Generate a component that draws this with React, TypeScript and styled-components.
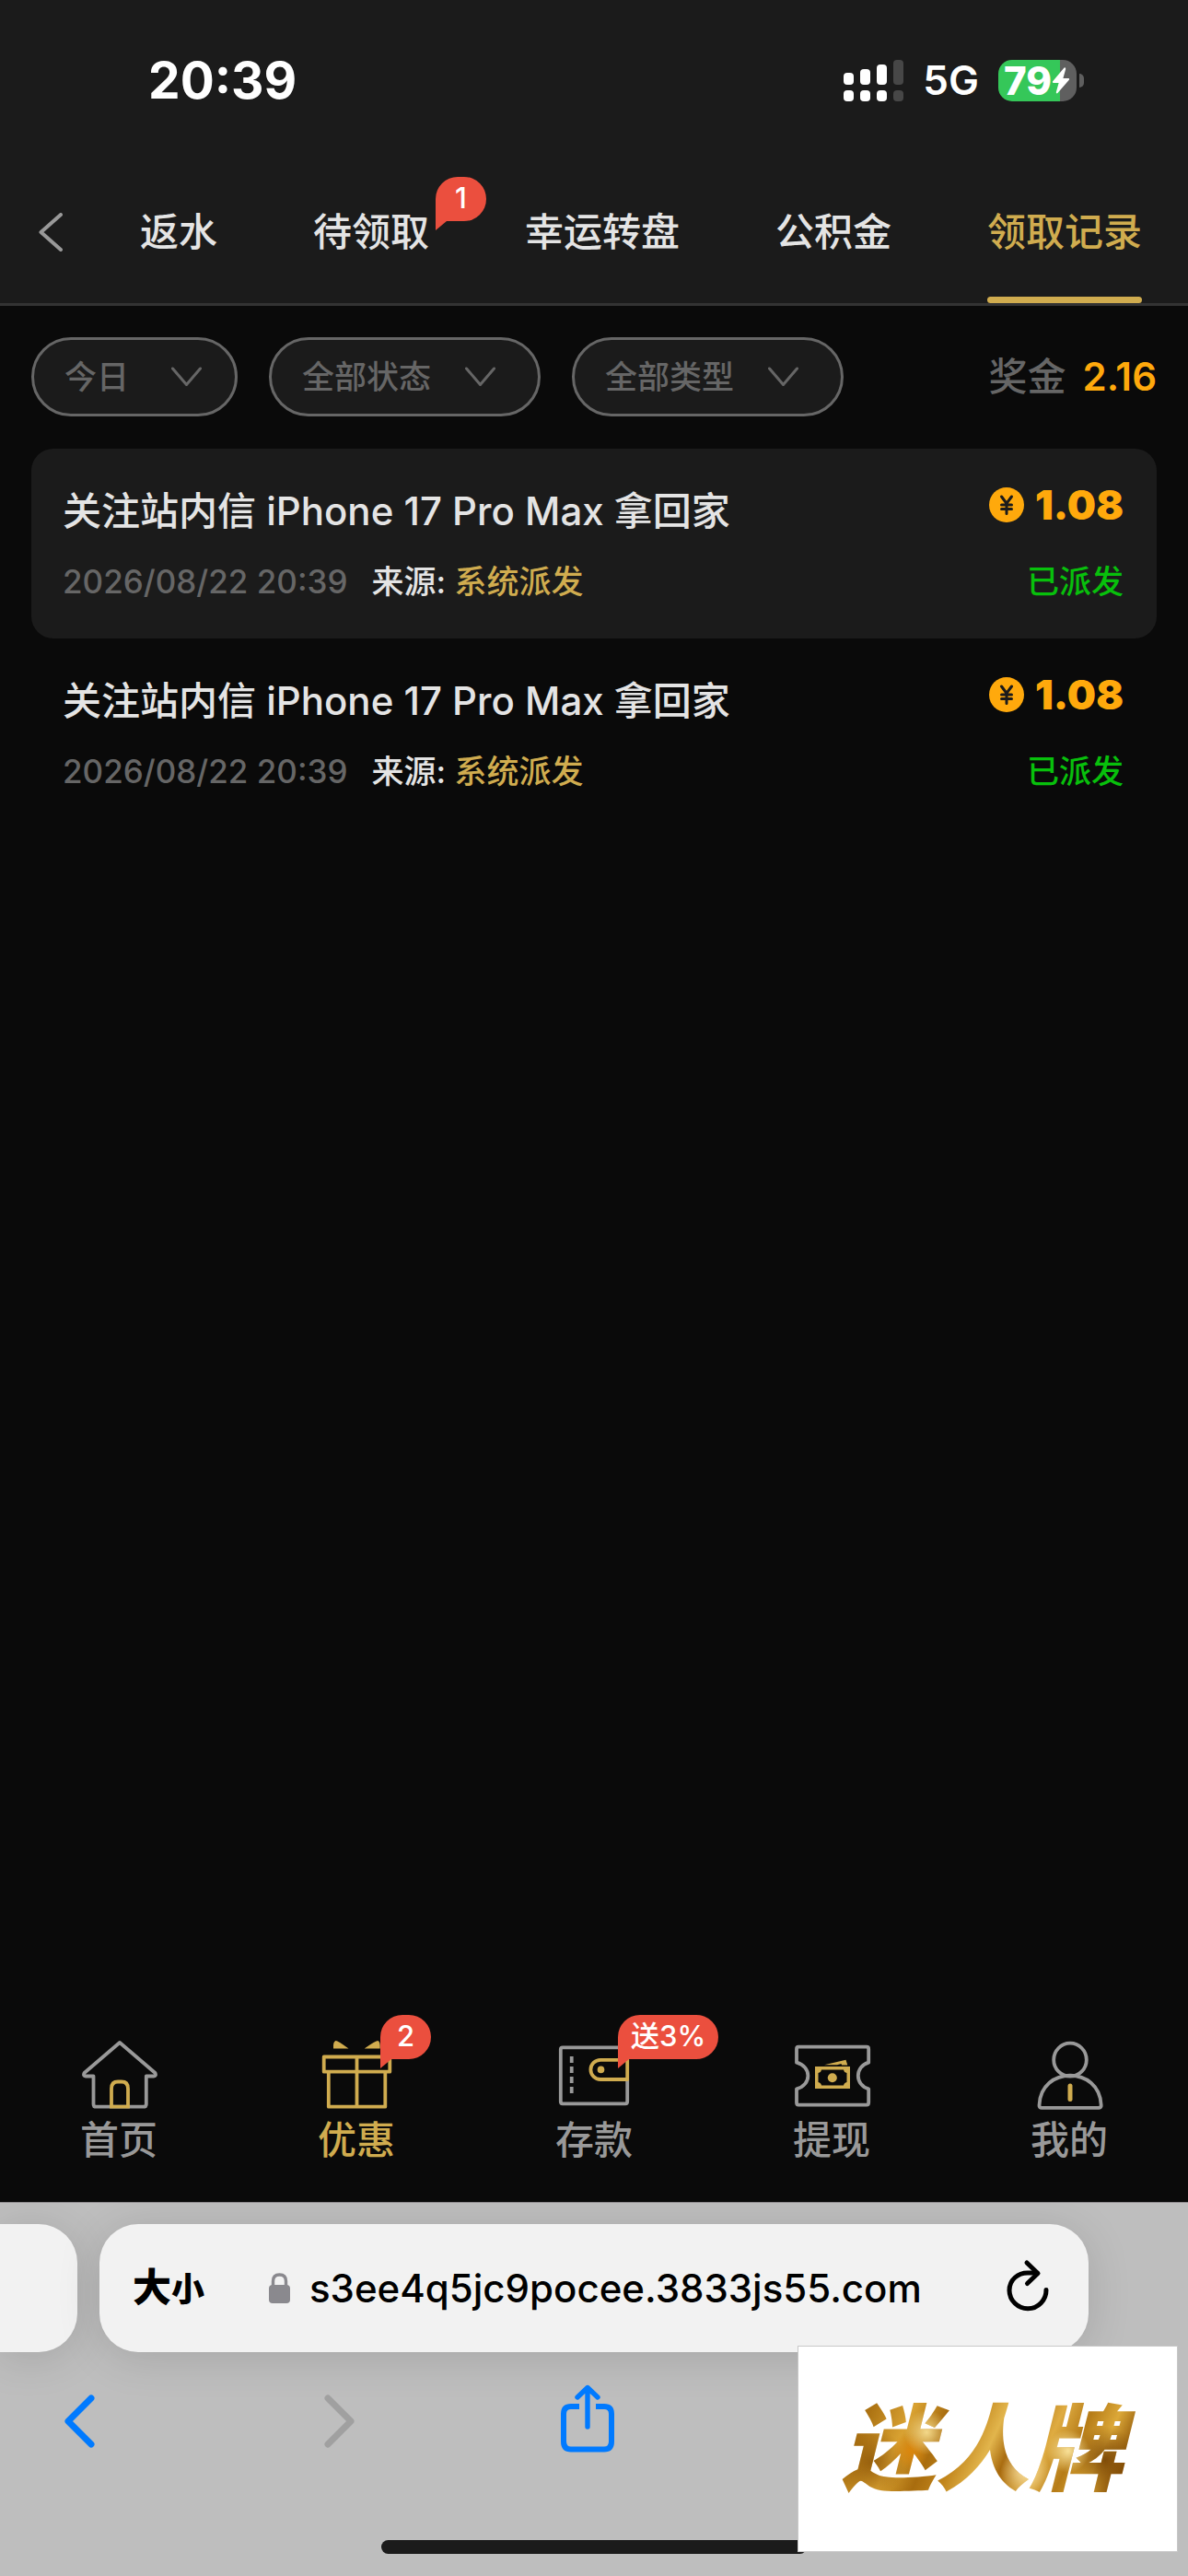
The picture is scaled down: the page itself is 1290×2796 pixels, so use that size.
import React from "react";
import styled, { createGlobalStyle } from "styled-components";

const GRAY = "#999999";
const DIM = "#666666";
const GOLD = "#d0ac4f";
const ORANGE = "#ffa90c";
const RED = "#eb4f3e";
const PANEL = "#1b1b1b";
const BLUE = "#007aff";

const GlobalStyle = createGlobalStyle`
  * { box-sizing: border-box; }
  body {
    margin: 0;
    background: #0a0a0a;
    color: #e4e4e4;
    font-family: Inter, "Noto Sans CJK SC", sans-serif;
    font-weight: 500;
  }
  button, input, select {
    margin: 0;
    padding: 0;
    border: 0;
    background: none;
    color: inherit;
    font: inherit;
  }
  svg { display: block; flex: none; }
`;

const Page = styled.div`
  position: relative;
  display: flex;
  flex-direction: column;
  min-height: 100vh;
`;

/* ---------- status bar and tabs ---------- */

const Header = styled.header`
  background: ${PANEL};
  border-bottom: 3px solid #333333;
`;

const StatusBar = styled.div`
  display: flex;
  align-items: center;
  justify-content: space-between;
  height: 174px;
  padding: 0 113px 0 161px;
  color: #ffffff;
`;

const Clock = styled.time`
  font-size: 55px;
  line-height: 60px;
  font-weight: 700;
`;

const StatusIcons = styled.div`
  display: flex;
  align-items: center;
  gap: 21px;
`;

const Network = styled.span`
  font-size: 44px;
  line-height: 60px;
  font-weight: 600;
`;

const BatteryWrap = styled.div`
  display: flex;
  align-items: center;
  gap: 3px;
`;

const Battery = styled.div<{ $level: number }>`
  display: flex;
  align-items: center;
  width: 85px;
  height: 45px;
  padding-left: 6px;
  border-radius: 15px;
  background: linear-gradient(
    to right,
    #35c759 ${(p) => p.$level}%,
    #5f5f5f ${(p) => p.$level}%
  );
  font-size: 42px;
  line-height: 45px;
  font-weight: 800;
`;

const BatteryTip = styled.div`
  width: 5px;
  height: 15px;
  border-radius: 0 5px 5px 0;
  background: #5f5f5f;
`;

const TabBar = styled.nav`
  display: flex;
  align-items: stretch;
  height: 155px;
  padding: 0 50px 0 42px;
`;

const BackButton = styled.button`
  display: flex;
  align-items: center;
  width: 110px;
`;

const TabList = styled.div`
  display: flex;
  flex: 1;
  justify-content: space-between;
`;

const Tab = styled.button<{ $active?: boolean }>`
  position: relative;
  font-size: 42px;
  line-height: 60px;
  white-space: nowrap;
  color: ${(p) => (p.$active ? GOLD : "#e4e4e4")};

  &::after {
    content: "";
    position: absolute;
    left: 0;
    right: 0;
    bottom: 0;
    height: 7px;
    border-radius: 4px;
    background: ${(p) => (p.$active ? GOLD : "transparent")};
  }
`;

const Badge = styled.span<{ $left: number; $top: number }>`
  position: absolute;
  left: ${(p) => p.$left}px;
  top: ${(p) => p.$top}px;
  min-width: 55px;
  height: 48px;
  padding: 0 14px;
  border-radius: 24px 24px 24px 0;
  background: ${RED};
  color: #ffffff;
  font-size: 31px;
  line-height: 46px;
  text-align: center;
  white-space: nowrap;

  &::after {
    content: "";
    position: absolute;
    left: 0;
    top: 100%;
    border-top: 10px solid ${RED};
    border-right: 12px solid transparent;
  }
`;

/* ---------- records ---------- */

const Main = styled.main`
  flex: 1;
  padding: 34px 34px 0;
`;

const FilterRow = styled.div`
  display: flex;
  align-items: center;
  gap: 34px;
  margin-bottom: 35px;
`;

const FilterPill = styled.label<{ $wide?: boolean }>`
  display: flex;
  align-items: center;
  width: ${(p) => (p.$wide ? 295 : 224)}px;
  height: 86px;
  padding: 0 ${(p) => (p.$wide ? 46 : 36)}px 0 33px;
  border: 3px solid ${DIM};
  border-radius: 43px;
  background: ${PANEL};
  color: ${DIM};
`;

const FilterSelect = styled.select`
  appearance: none;
  flex: 1;
  min-width: 0;
  font-size: 35px;
  line-height: 50px;
`;

const Total = styled.div`
  display: flex;
  gap: 18px;
  margin-left: auto;
  font-size: 42px;
  line-height: 60px;
  color: ${DIM};
`;

const TotalValue = styled.span`
  color: ${ORANGE};
  font-weight: 600;
`;

const RecordList = styled.ul`
  margin: 0;
  padding: 0;
  list-style: none;
`;

const RecordCard = styled.li`
  display: flex;
  justify-content: space-between;
  padding: 36px 36px 37px 34px;
  border-radius: 24px;

  &:nth-child(odd) {
    background: ${PANEL};
  }
`;

const RecordInfo = styled.div`
  display: flex;
  flex-direction: column;
  gap: 19px;
`;

const RecordTitle = styled.h2`
  margin: 0;
  font-size: 42px;
  line-height: 64px;
  font-weight: 500;
`;

const RecordMeta = styled.div`
  display: flex;
  gap: 26px;
  font-size: 35px;
  line-height: 50px;
`;

const RecordTime = styled.time`
  color: ${DIM};
`;

const Source = styled.span`
  color: ${GOLD};
`;

const RecordResult = styled.div`
  display: flex;
  flex-direction: column;
  align-items: flex-end;
  justify-content: space-between;
`;

const Amount = styled.div`
  display: flex;
  align-items: center;
  gap: 12px;
  color: ${ORANGE};
  font-size: 44px;
  line-height: 50px;
  font-weight: 900;
`;

const Status = styled.span`
  color: #08c00c;
  font-size: 35px;
  line-height: 50px;
`;

/* ---------- site navigation ---------- */

const BottomNav = styled.nav`
  display: grid;
  grid-template-columns: repeat(5, 1fr);
  padding: 38px 0 42px;
`;

const NavLink = styled.a<{ $active?: boolean }>`
  display: flex;
  flex-direction: column;
  align-items: center;
  gap: 6px;
  color: ${(p) => (p.$active ? GOLD : GRAY)};
  font-size: 42px;
  line-height: 50px;
  text-decoration: none;
`;

const NavIcon = styled.span`
  position: relative;
`;

/* ---------- browser chrome ---------- */

const Browser = styled.footer`
  border-top: 1px solid #8f8b8e;
  background: #bebebe;
  color: #000000;
  overflow: hidden;
`;

const AddressRow = styled.div`
  display: flex;
  gap: 24px;
  padding: 23px 108px 0 0;
`;

const PreviousTab = styled.button`
  width: 84px;
  height: 139px;
  border-radius: 0 42px 42px 0;
  background: #f2f2f2;
  box-shadow: 0 6px 48px rgba(0, 0, 0, 0.13);
`;

const AddressBar = styled.form`
  display: flex;
  flex: 1;
  align-items: center;
  height: 139px;
  padding: 0 42px 0 36px;
  border-radius: 42px;
  background: #f2f2f2;
  box-shadow: 0 6px 48px rgba(0, 0, 0, 0.13);
`;

const TextSizeButton = styled.button`
  display: flex;
  align-items: baseline;
  width: 147px;
  font-size: 42px;
  line-height: 60px;
  font-weight: 800;
`;

const SmallGlyph = styled.span`
  font-size: 36px;
`;

const AddressLabel = styled.label`
  display: flex;
  flex: 1;
  align-items: center;
  gap: 20px;
`;

const AddressInput = styled.input`
  flex: 1;
  min-width: 0;
  font-size: 42px;
  line-height: 60px;
`;

const IconButton = styled.button`
  display: flex;
  align-items: center;
  justify-content: center;
`;

const Toolbar = styled.div`
  display: flex;
  gap: 212px;
  padding: 35px 54px 89px;
`;

const HomeIndicator = styled.div`
  width: 462px;
  height: 15px;
  margin: 0 auto 24px;
  border-radius: 8px;
  background: #1b1b1b;
`;

const Watermark = styled.div`
  position: absolute;
  right: 11px;
  bottom: 26px;
  display: flex;
  align-items: center;
  justify-content: center;
  width: 413px;
  height: 224px;
  border: 1px solid #c8c8c8;
  background: #ffffff;
`;

const WatermarkText = styled.span`
  padding: 0 20px 0 8px;
  background:
    radial-gradient(circle at 30% 35%, rgba(250, 226, 150, 0.9) 0, rgba(250, 226, 150, 0) 10%),
    radial-gradient(circle at 62% 70%, rgba(252, 230, 170, 0.9) 0, rgba(252, 230, 170, 0) 12%),
    radial-gradient(circle at 76% 52%, rgba(255, 235, 165, 0.9) 0, rgba(255, 235, 165, 0) 9%),
    radial-gradient(circle at 25% 52%, rgba(222, 134, 10, 0.9) 0, rgba(222, 134, 10, 0) 8%),
    radial-gradient(circle at 88% 60%, rgba(120, 68, 4, 0.9) 0, rgba(120, 68, 4, 0) 12%),
    radial-gradient(circle at 12% 62%, rgba(140, 85, 8, 0.8) 0, rgba(140, 85, 8, 0) 12%),
    linear-gradient(115deg, #a06a0c 0%, #ac7212 12%, #d9a232 24%, #a86c0e 34%, #c2861c 42%,
      #e2b54c 50%, #a86a0e 56%, #dfac42 66%, #b67c18 74%, #dca838 82%, #8c5408 90%, #c88c22 100%);
  background-clip: text;
  -webkit-background-clip: text;
  color: transparent;
  font-size: 102px;
  line-height: 120px;
  font-weight: 900;
  font-style: italic;
`;

/* ---------- drawings ---------- */

const SignalIcon = () => (
  <svg width="65" height="45" viewBox="0 0 65 45" fill="#fff" aria-hidden="true">
    <rect x="0" y="14" width="11" height="13" rx="4" />
    <rect x="18" y="10" width="11" height="17" rx="4" />
    <rect x="36" y="5" width="11" height="22" rx="4" />
    <rect x="54" y="0" width="11" height="27" rx="4" fill="#474747" />
    <rect x="0" y="33" width="11" height="12" rx="4" />
    <rect x="18" y="33" width="11" height="12" rx="4" />
    <rect x="36" y="33" width="11" height="12" rx="4" />
    <rect x="54" y="33" width="11" height="12" rx="4" fill="#474747" />
  </svg>
);

const BoltIcon = () => (
  <svg width="20" height="31" viewBox="0 0 21 31" fill="#fff" aria-hidden="true">
    <path d="M14 1 L1 16.500 Q0.500 18 2 18 H8 L5 29 Q5.500 31 7 29.500 L20 14.500 Q20.500 13 19 13 H13 L16 2 Q15.500 0 14 1 Z" />
  </svg>
);

const ChevronLeft = () => (
  <svg width="27" height="42" viewBox="0 0 27 42" fill="none" stroke={GRAY} strokeWidth="4" strokeLinecap="round" strokeLinejoin="round" aria-hidden="true">
    <path d="M24 2 L2.500 21 L24 40" />
  </svg>
);

const ChevronDown = () => (
  <svg width="33" height="22" viewBox="0 0 33 22" fill="none" stroke={DIM} strokeWidth="3" strokeLinecap="round" strokeLinejoin="round" aria-hidden="true">
    <path d="M1.500 2 L16.500 19.500 L31.500 2" />
  </svg>
);

const CoinIcon = () => (
  <svg width="38" height="38" viewBox="0 0 38 38" aria-hidden="true">
    <circle cx="19" cy="19" r="19" fill={ORANGE} />
    <path d="M13.500 10 L19 17.500 L24.500 10 M19 17.500 V28.500 M13.500 19 H24.500 M13.500 23.500 H24.500" fill="none" stroke="#1b1b1b" strokeWidth="3" strokeLinecap="round" />
  </svg>
);

const NavSvg = ({ children }: { children: React.ReactNode }) => (
  <svg width="86" height="80" viewBox="0 0 86 80" fill="none" stroke={GRAY} strokeWidth="3.800" strokeLinejoin="round" aria-hidden="true">
    {children}
  </svg>
);

const HomeIcon = () => (
  <NavSvg>
    <path d="M44 5 L5.500 38 Q4 41.500 7 41.500 H15.500 V72 Q15.500 74.700 18 74.700 H70 Q72.800 74.700 72.800 72 V41.500 H81 Q84 41.500 82.500 38 Z" />
    <path d="M35 74.700 V55 Q35 47.500 42 47.500 H46 Q53 47.500 53 55 V74.700 Z" stroke={GOLD} strokeLinejoin="miter" />
  </NavSvg>
);

const GiftIcon = () => (
  <NavSvg>
    <g stroke={GOLD}>
      <path d="M7.700 20.500 H79.300 V36.700 H7.700 Z M12.800 36.700 V74.700 H74.300 V36.700 M43.500 20.500 V74.700" />
      <path d="M18 11.400 Q17.500 4 20.500 3 Q22 2.500 34.500 11.400 Z M51.700 11.400 Q64 3 66.500 3 Q69 4 68.700 11.400 Z" fill={GOLD} stroke="none" />
    </g>
  </NavSvg>
);

const WalletIcon = () => (
  <NavSvg>
    <path d="M79.200 24 V12.500 Q79.200 10.300 77 10.300 H9 Q6.800 10.300 6.800 12.500 V69 Q6.800 71.300 9 71.300 H77 Q79.200 71.300 79.200 69 V45" />
    <path d="M18.700 20 V60" strokeDasharray="7 4" />
    <path d="M79.200 23.800 H50 A10.600 10.600 0 0 0 50 45 H79.200 Z" stroke={GOLD} />
    <circle cx="50.500" cy="34.400" r="3.800" fill={GOLD} stroke="none" />
  </NavSvg>
);

const TicketIcon = () => (
  <NavSvg>
    <path d="M5 12 Q5 9.700 7 9.700 H81 Q83.200 9.700 83.200 12 V26.700 C68 31 68 51 83.200 55.300 V70 Q83.200 72.700 81 72.700 H7 Q5 72.700 5 70 V55.300 C21.500 51 21.500 31 5 26.700 Z" />
    <g fill={GOLD} stroke="none">
      <path fillRule="evenodd" d="M25 31 H63 V55 H25 Z M32 34.500 Q31.500 37.500 28.500 38 V48 Q31.500 48.500 32 51.500 H56 Q56.500 48.500 59.500 48 V38 Q56.500 37.500 56 34.500 Z" />
      <circle cx="43.800" cy="43.200" r="5" />
      <path d="M35 29.300 L58.500 23.700 L60.300 29.500 H54 L53.500 28 L49 29.300 Z" />
    </g>
  </NavSvg>
);

const PersonIcon = () => (
  <NavSvg>
    <ellipse cx="44" cy="23.700" rx="17.800" ry="18" />
    <path d="M10.500 73 C12 30 76 30 77.700 73 Q77.700 75.800 75 75.800 H13 Q10.500 75.800 10.500 73 Z" />
    <path d="M44 52 V66.500" stroke={GOLD} strokeWidth="5" strokeLinecap="round" />
  </NavSvg>
);

const LockIcon = () => (
  <svg width="25" height="34" viewBox="0 0 25 34" aria-hidden="true">
    <rect x="1" y="13" width="23" height="20" rx="4" fill="#8a898e" />
    <path d="M5.500 14 V9 Q5.500 2 12.500 2 Q19.500 2 19.500 9 V14" fill="none" stroke="#8a898e" strokeWidth="3.400" />
  </svg>
);

const ReloadIcon = () => (
  <svg width="48" height="64" viewBox="0 0 48 64" fill="none" stroke="#000" strokeWidth="5" strokeLinecap="round" strokeLinejoin="round" aria-hidden="true">
    <path d="M34 15 H26 C13 14 4 23 4 34 A20 20 0 0 0 44 33.500" />
    <path d="M23 4 L35 15.500 L23.500 26.500" />
  </svg>
);

const BrowserBackIcon = () => (
  <svg width="64" height="80" viewBox="0 0 64 80" fill="none" stroke={BLUE} strokeWidth="7" strokeLinecap="round" strokeLinejoin="round" aria-hidden="true">
    <path d="M45 15 L20 40 L45 65" />
  </svg>
);

const BrowserForwardIcon = () => (
  <svg width="64" height="80" viewBox="0 0 64 80" fill="none" stroke="#a0a0a0" strokeWidth="7" strokeLinecap="round" strokeLinejoin="round" aria-hidden="true">
    <path d="M26 15 L51 40 L26 65" />
  </svg>
);

const ShareIcon = () => (
  <svg width="64" height="80" viewBox="0 0 64 80" fill="none" stroke={BLUE} strokeWidth="6" strokeLinejoin="round" aria-hidden="true">
    <path d="M23 24 H14 Q6 24 6 32 V62 Q6 70.500 14 70.500 H50 Q58 70.500 58 62 V32 Q58 24 50 24 H41" />
    <path d="M32 46 V4 M21 14 L32 3.500 L43 14" strokeWidth="5.400" strokeLinecap="round" />
  </svg>
);

/* ---------- content ---------- */

const tabs = [
  { label: "返水" },
  { label: "待领取", badge: "1" },
  { label: "幸运转盘" },
  { label: "公积金" },
  { label: "领取记录", active: true },
];

const filters = [
  { name: "日期", value: "今日" },
  { name: "状态", value: "全部状态", wide: true },
  { name: "类型", value: "全部类型", wide: true },
];

const records = [1, 2].map((id) => ({
  id,
  title: "关注站内信 iPhone 17 Pro Max 拿回家",
  time: "2026/08/22 20:39",
  source: "系统派发",
  amount: "1.08",
  status: "已派发",
}));

const navItems = [
  { label: "首页", Icon: HomeIcon },
  { label: "优惠", Icon: GiftIcon, badge: "2", active: true },
  { label: "存款", Icon: WalletIcon, badge: "送3%" },
  { label: "提现", Icon: TicketIcon },
  { label: "我的", Icon: PersonIcon },
];

export default function App() {
  return (
    <Page>
      <GlobalStyle />
      <Header>
        <StatusBar>
          <Clock>20:39</Clock>
          <StatusIcons>
            <SignalIcon />
            <Network>5G</Network>
            <BatteryWrap>
              <Battery $level={79}>
                79
                <BoltIcon />
              </Battery>
              <BatteryTip />
            </BatteryWrap>
          </StatusIcons>
        </StatusBar>
        <TabBar>
          <BackButton type="button" aria-label="返回">
            <ChevronLeft />
          </BackButton>
          <TabList>
            {tabs.map((tab) => (
              <Tab key={tab.label} type="button" $active={tab.active}>
                {tab.label}
                {tab.badge && (
                  <Badge $left={133} $top={18}>
                    {tab.badge}
                  </Badge>
                )}
              </Tab>
            ))}
          </TabList>
        </TabBar>
      </Header>

      <Main>
        <FilterRow>
          {filters.map((filter) => (
            <FilterPill key={filter.name} $wide={filter.wide}>
              <FilterSelect aria-label={filter.name}>
                <option>{filter.value}</option>
              </FilterSelect>
              <ChevronDown />
            </FilterPill>
          ))}
          <Total>
            奖金 <TotalValue>2.16</TotalValue>
          </Total>
        </FilterRow>
        <RecordList>
          {records.map((record) => (
            <RecordCard key={record.id}>
              <RecordInfo>
                <RecordTitle>{record.title}</RecordTitle>
                <RecordMeta>
                  <RecordTime>{record.time}</RecordTime>
                  <span>
                    来源: <Source>{record.source}</Source>
                  </span>
                </RecordMeta>
              </RecordInfo>
              <RecordResult>
                <Amount>
                  <CoinIcon />
                  {record.amount}
                </Amount>
                <Status>{record.status}</Status>
              </RecordResult>
            </RecordCard>
          ))}
        </RecordList>
      </Main>

      <BottomNav>
        {navItems.map(({ label, Icon, badge, active }) => (
          <NavLink key={label} href="#" $active={active}>
            <NavIcon>
              <Icon />
              {badge && (
                <Badge $left={69} $top={-25}>
                  {badge}
                </Badge>
              )}
            </NavIcon>
            {label}
          </NavLink>
        ))}
      </BottomNav>

      <Browser>
        <AddressRow>
          <PreviousTab type="button" aria-label="上一个标签页" />
          <AddressBar>
            <TextSizeButton type="button">
              大<SmallGlyph>小</SmallGlyph>
            </TextSizeButton>
            <AddressLabel>
              <LockIcon />
              <AddressInput type="text" aria-label="网址" defaultValue="s3ee4q5jc9pocee.3833js55.com" />
            </AddressLabel>
            <IconButton type="button" aria-label="刷新">
              <ReloadIcon />
            </IconButton>
          </AddressBar>
        </AddressRow>
        <Toolbar>
          <IconButton type="button" aria-label="后退">
            <BrowserBackIcon />
          </IconButton>
          <IconButton type="button" aria-label="前进" disabled>
            <BrowserForwardIcon />
          </IconButton>
          <IconButton type="button" aria-label="分享">
            <ShareIcon />
          </IconButton>
        </Toolbar>
        <HomeIndicator />
      </Browser>

      <Watermark>
        <WatermarkText>迷人牌</WatermarkText>
      </Watermark>
    </Page>
  );
}
